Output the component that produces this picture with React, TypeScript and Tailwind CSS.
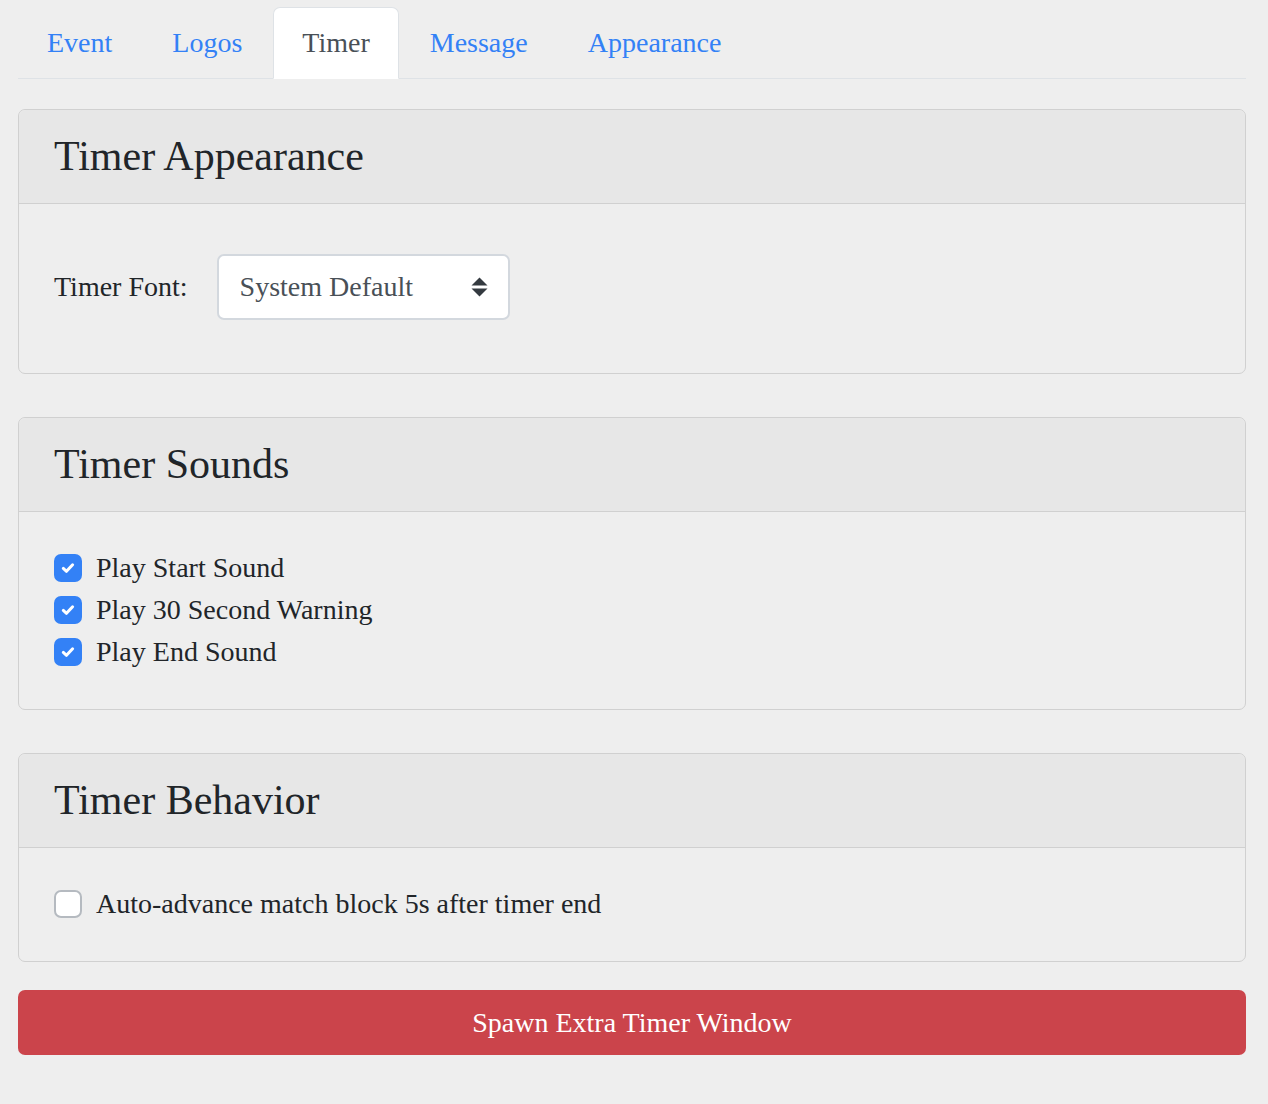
import React from 'react';

const tabs = ['Event', 'Logos', 'Timer', 'Message', 'Appearance'];

function Check({ checked }: { checked: boolean }) {
  return checked ? (
    <span className="flex h-[28px] w-[28px] shrink-0 items-center justify-center rounded-[7px] bg-[#3381f6]">
      <svg width="14" height="12" viewBox="0 0 14 12">
        <path d="M2.3 6.4 L5.5 9.3 L11.6 2.8" fill="none" stroke="#fff" strokeWidth="3" strokeLinecap="round" strokeLinejoin="round" />
      </svg>
    </span>
  ) : (
    <span className="h-[28px] w-[28px] shrink-0 rounded-[7px] border-2 border-[#b5bac0] bg-white" />
  );
}

function Card({ title, children, className = '' }: { title: string; children: React.ReactNode; className?: string }) {
  return (
    <div className={`rounded-[7px] border border-[#d0d0d0] ${className}`}>
      <div className="rounded-t-[7px] border-b border-[#d0d0d0] bg-[#e7e7e7] px-[35px] py-[21px]">
        <h3 className="text-[42px] leading-[51px] text-[#212529]">{title}</h3>
      </div>
      <div className="px-[35px] pt-[35px] pb-[36px]">{children}</div>
    </div>
  );
}

function CheckRow({ label, checked }: { label: string; checked: boolean }) {
  return (
    <label className="flex h-[42px] items-center gap-[14px] text-[28px] leading-[42px] text-[#212529]">
      <Check checked={checked} />
      <span>{label}</span>
    </label>
  );
}

export default function App() {
  return (
    <div className="min-h-[1104px] bg-[#eeeeee] pl-[18px] pr-[22px] pt-[7px] pb-[49px] font-['Liberation_Serif','Times_New_Roman',serif] text-[28px] text-[#212529]">
      {/* Tabs */}
      <div className="flex gap-[2px] border-b border-[#dee2e6]">
        {tabs.map((t) => (
          <div
            key={t}
            className={
              t === 'Timer'
                ? '-mb-px rounded-t-[7px] border border-[#dee2e6] border-b-white bg-white px-[28px] py-[14px] leading-[42px] text-[#495057]'
                : '-mb-px border border-transparent px-[28px] py-[14px] leading-[42px] text-[#3381f6]'
            }
          >
            {t}
          </div>
        ))}
      </div>

      <Card title="Timer Appearance" className="mt-[30px]">
        <div className="flex items-center gap-[29px] pt-[15px] pb-[17px]">
          <span className="leading-[42px]">Timer Font:</span>
          <div className="flex h-[66px] w-[293px] items-center justify-between rounded-[7px] border-2 border-[#d3d8de] bg-white pl-[21px] pr-[20px] text-[#495057]">
            <span>System Default</span>
            <svg width="17" height="20" viewBox="0 0 17 20">
              <path d="M0.5 8.5 L8.5 0.5 L16.5 8.5 Z" fill="#343a40" />
              <path d="M0.5 11.5 L8.5 19.5 L16.5 11.5 Z" fill="#343a40" />
            </svg>
          </div>
        </div>
      </Card>

      <Card title="Timer Sounds" className="mt-[43px]">
        <CheckRow label="Play Start Sound" checked />
        <CheckRow label="Play 30 Second Warning" checked />
        <CheckRow label="Play End Sound" checked />
      </Card>

      <Card title="Timer Behavior" className="mt-[43px]">
        <CheckRow label="Auto-advance match block 5s after timer end" checked={false} />
      </Card>

      <button className="mt-[28px] block h-[65px] w-full rounded-[7px] bg-[#cb444b] text-center text-[28px] leading-[42px] text-white">
        Spawn Extra Timer Window
      </button>
    </div>
  );
}
